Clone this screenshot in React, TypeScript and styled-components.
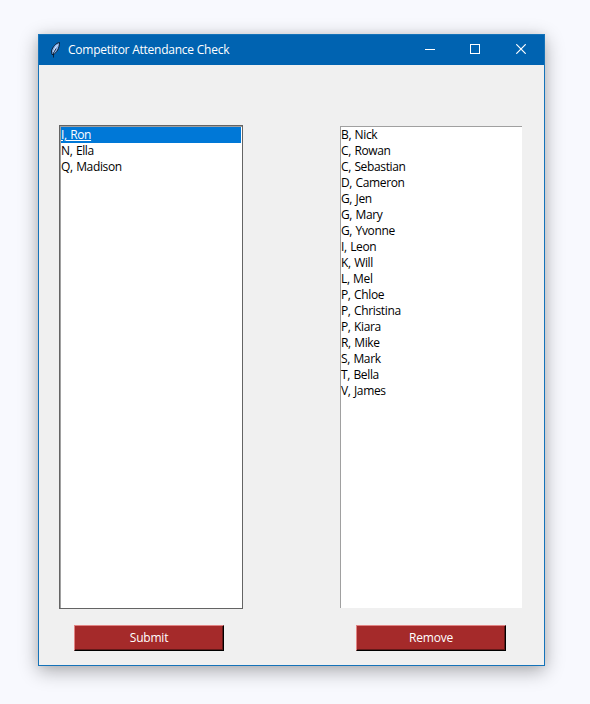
import React from "react";
import styled, { createGlobalStyle } from "styled-components";

const GlobalStyle = createGlobalStyle`
  * { box-sizing: border-box; }
  body { margin: 0; background: #f8f9fe; }
`;

const Desktop = styled.main`
  width: 590px;
  height: 704px;
  padding: 34px 0 0 38px;
  overflow: hidden;
  background: #f8f9fe;
  font-family: "Open Sans", "Noto Sans", sans-serif;
  font-size: 12px;
`;

const AppWindow = styled.section`
  display: flex;
  flex-direction: column;
  width: 507px;
  height: 632px;
  border: 1px solid #1573b9;
  background: #f0f0f0;
  box-shadow: 0 5px 18px rgba(0, 0, 0, 0.32), 0 0 8px rgba(0, 0, 0, 0.06);
`;

const TitleBar = styled.header`
  display: flex;
  align-items: center;
  flex: none;
  height: 30px;
  padding-left: 8px;
  background: #0063b1;
  color: #fff;
`;

const Title = styled.h1`
  flex: 1;
  margin: 0 0 0 5px;
  font-size: 12px;
  font-weight: 400;
  line-height: 30px;
  letter-spacing: -0.24px;
  white-space: nowrap;
`;

const WindowControls = styled.div`
  display: flex;
`;

const ControlButton = styled.button<{ $width?: number }>`
  display: flex;
  justify-content: center;
  width: ${(p) => p.$width ?? 46}px;
  height: 30px;
  padding: 9px 0 0;
  border: 0;
  background: transparent;
  color: #fff;
`;

const Content = styled.div`
  display: flex;
  gap: 96px;
  padding: 60px 0 0 20px;
`;

const Column = styled.div`
  display: flex;
  flex-direction: column;
  gap: 16px;
`;

const ListFrame = styled.div<{ $focused: boolean }>`
  width: 184px;
  height: 484px;
  border: 1px solid ${(p) => (p.$focused ? "#646464" : "transparent")};
`;

const ListBox = styled.ul`
  height: 482px;
  margin: 0;
  padding: 0 1px 0 0;
  border-top: 1px solid #a0a0a0;
  border-left: 1px solid #a0a0a0;
  background: #fff;
  list-style: none;
`;

const ListItem = styled.li<{ $selected: boolean }>`
  height: 16px;
  line-height: 16px;
  letter-spacing: -0.36px;
  word-spacing: 0.7px;
  white-space: nowrap;
  background: ${(p) => (p.$selected ? "#0078d7" : "transparent")};
  color: ${(p) => (p.$selected ? "#fff" : "#000")};
  text-decoration: ${(p) => (p.$selected ? "underline" : "none")};
`;

const ActionButton = styled.button<{ $indent: number }>`
  width: 150px;
  height: 26px;
  margin-left: ${(p) => p.$indent}px;
  padding: 0;
  border: 1px solid;
  border-color: #e18484 #000 #000 #e18484;
  background: #a52a2a;
  box-shadow: inset -1px -1px #631919;
  color: #fff;
  font: inherit;
  line-height: 24px;
  letter-spacing: -0.2px;
`;

const FeatherIcon = () => (
  <svg width="16" height="16" viewBox="0 0 16 16" aria-hidden="true">
    <path d="M12.500 .5C9 1 5.500 5 4.500 9l.5 3.500h1.500C9.500 10.500 12.500 6.500 12.500 .5Z" fill="#86b0ea" stroke="#071322" strokeWidth=".9" />
    <path d="M10.800 2.800C8.800 4.500 7.500 7 6.500 10" fill="none" stroke="#e4efff" />
    <path d="M9 6.500 6.500 11v4.500" fill="none" stroke="#071322" strokeWidth=".8" />
  </svg>
);

const competitors = ["I, Ron", "N, Ella", "Q, Madison"];
const attending = [
  "B, Nick", "C, Rowan", "C, Sebastian", "D, Cameron", "G, Jen", "G, Mary",
  "G, Yvonne", "I, Leon", "K, Will", "L, Mel", "P, Chloe", "P, Christina",
  "P, Kiara", "R, Mike", "S, Mark", "T, Bella", "V, James",
];

interface NameColumnProps {
  names: string[];
  action: string;
  actionIndent: number;
  selected?: string;
}

const NameColumn = ({ names, action, actionIndent, selected }: NameColumnProps) => (
  <Column>
    <ListFrame $focused={selected !== undefined}>
      <ListBox>
        {names.map((name) => (
          <ListItem key={name} $selected={name === selected}>{name}</ListItem>
        ))}
      </ListBox>
    </ListFrame>
    <ActionButton $indent={actionIndent}>{action}</ActionButton>
  </Column>
);

export default function App() {
  return (
    <Desktop>
      <GlobalStyle />
      <AppWindow>
        <TitleBar>
          <FeatherIcon />
          <Title>Competitor Attendance Check</Title>
          <WindowControls>
            <ControlButton $width={44} aria-label="Minimize">
              <svg width="10" height="10"><path d="M0 5.500H10" stroke="currentColor" /></svg>
            </ControlButton>
            <ControlButton aria-label="Maximize">
              <svg width="10" height="10"><rect x=".5" y=".5" width="9" height="9" fill="none" stroke="currentColor" /></svg>
            </ControlButton>
            <ControlButton aria-label="Close">
              <svg width="10" height="10"><path d="M.3.3 9.700 9.700M9.700.3.3 9.700" stroke="currentColor" strokeWidth="1.200" /></svg>
            </ControlButton>
          </WindowControls>
        </TitleBar>
        <Content>
          <NameColumn names={competitors} action="Submit" actionIndent={15} selected="I, Ron" />
          <NameColumn names={attending} action="Remove" actionIndent={17} />
        </Content>
      </AppWindow>
    </Desktop>
  );
}
